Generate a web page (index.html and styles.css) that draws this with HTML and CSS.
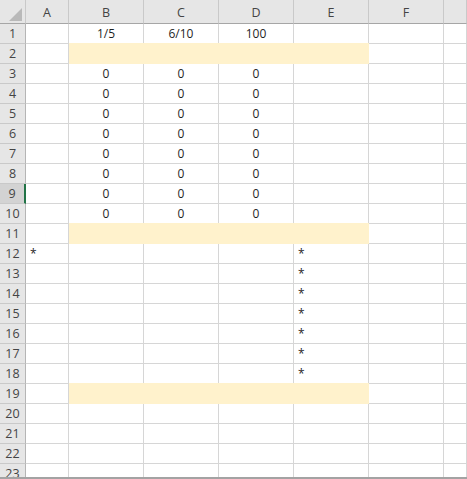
FILE: index.html
```html
<!DOCTYPE html>
<html lang="en">
<head>
  <meta charset="UTF-8" />
  <title>Sheet1</title>
  <link rel="stylesheet" href="styles.css">
</head>
<body>
  <main class="sheet">
    <div class="grid" id="grid">
      <div class="head corner">
        <svg width="26" height="24" viewBox="0 0 26 24"><polygon points="22,8 22,21 9,21" fill="#b9b9b9"/></svg>
      </div>
      <div class="head col">A</div>
      <div class="head col">B</div>
      <div class="head col">C</div>
      <div class="head col">D</div>
      <div class="head col">E</div>
      <div class="head col">F</div>
      <div class="head col"></div>
    </div>
  </main>

  <script>
    document.addEventListener("DOMContentLoaded", () => {
      const grid = document.getElementById("grid");
      const fillRows = [2, 11, 19];

      // cell values by row: [A, B, C, D, E, F, G]
      const values = {
        1: ["", "1/5", "6/10", "100", "", "", ""],
        12: ["*", "", "", "", "*", "", ""]
      };
      for (let r = 3; r <= 10; r++) values[r] = ["", "0", "0", "0", "", "", ""];
      for (let r = 13; r <= 18; r++) values[r] = ["", "", "", "", "*", "", ""];

      for (let r = 1; r <= 23; r++) {
        const head = document.createElement("div");
        head.className = "head row" + (r === 9 ? " selected" : "");
        head.textContent = r;
        grid.appendChild(head);

        const row = values[r] || ["", "", "", "", "", "", ""];
        row.forEach((v, i) => {
          const cell = document.createElement("div");
          cell.className = "cell";
          if (i === 0 || i === 4) cell.classList.add("left");
          if (fillRows.includes(r) && i >= 1 && i <= 4) cell.classList.add("fill");
          cell.textContent = v;
          grid.appendChild(cell);
        });
      }
    });
  </script>
</body>
</html>
```

FILE: styles.css
```css
* {
  box-sizing: border-box;
}

body {
  margin: 0;
  padding: 0;
  background: #fff;
  font-family: 'Open Sans', sans-serif;
  font-size: 12px;
  color: #1f1f1f;
}

.sheet {
  height: 479px;
  overflow: hidden;
  border-bottom: 2px solid #a3a3a3;
}

.grid {
  display: grid;
  grid-template-columns: 26px 43px 75px 75px 75px 75px 75px 1fr;
  grid-template-rows: 24px;
  grid-auto-rows: 20px;
}

.head {
  display: flex;
  align-items: center;
  justify-content: center;
  background: #e6e6e6;
  color: #444;
  font-size: 12.5px;
  border-right: 1px solid #c9c9c9;
  border-bottom: 1px solid #c9c9c9;
}

.head.col,
.head.corner {
  border-bottom-color: #a6a6a6;
  padding-top: 1px;
}

.head.corner {
  display: block;
  padding: 0;
}

.head.corner svg {
  display: block;
}

.head.row {
  border-right-color: #b5b5b5;
}

.head.row.selected {
  background: #d3d3d3;
  border-right: 2px solid #217346;
}

.cell {
  display: flex;
  align-items: center;
  justify-content: center;
  border-right: 1px solid #d6d6d6;
  border-bottom: 1px solid #d6d6d6;
  white-space: nowrap;
}

.cell.left {
  justify-content: flex-start;
  padding-left: 4px;
}

.cell.fill {
  background: #fff2cc;
  border-color: #fff2cc;
  box-shadow: 0 -1px 0 #fff2cc;
}
```
